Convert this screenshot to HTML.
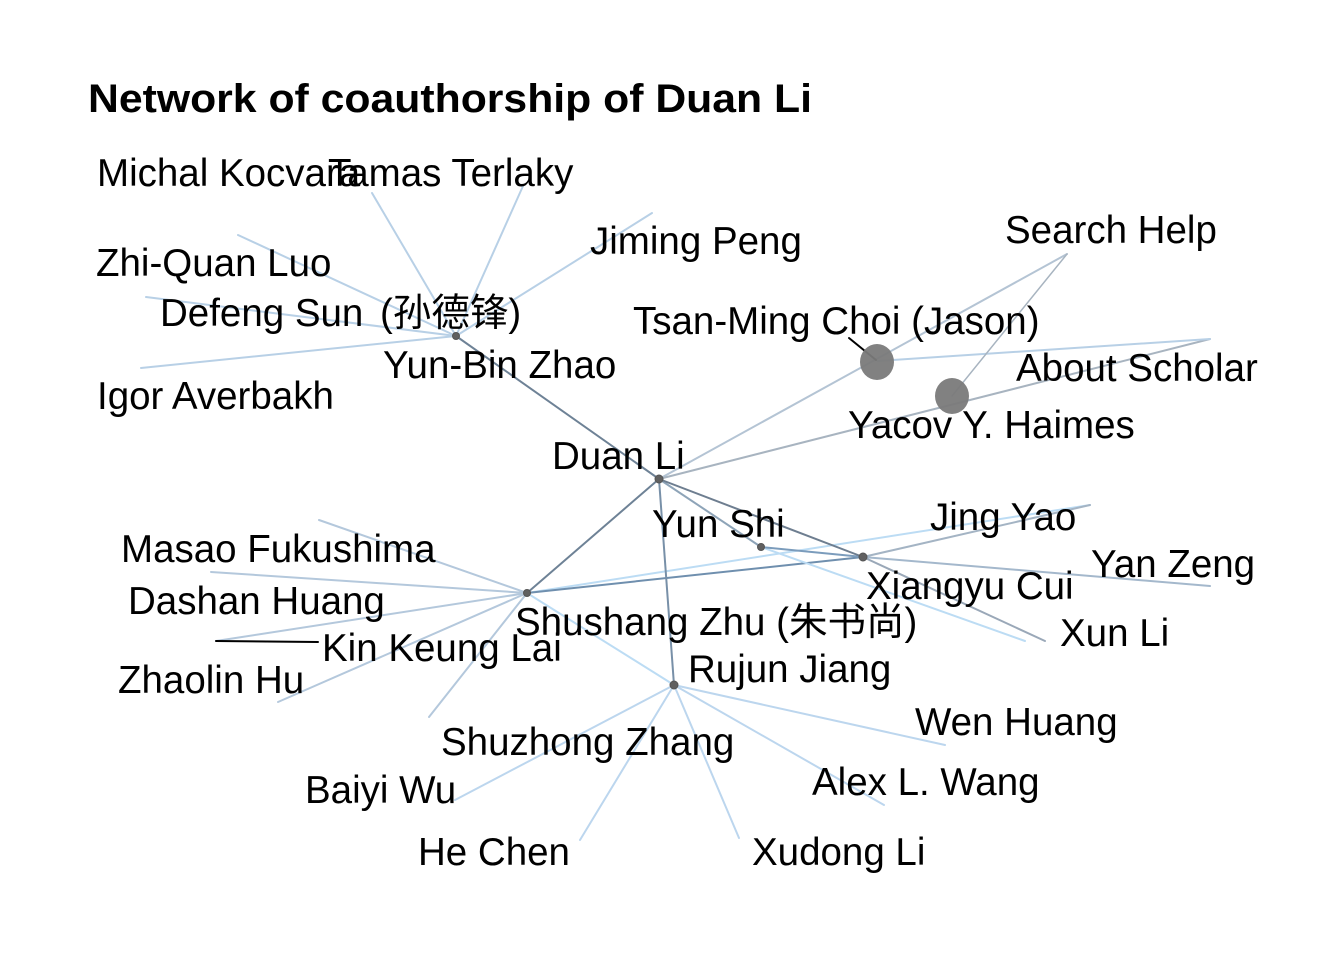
<!DOCTYPE html>
<html><head><meta charset="utf-8"><style>
html,body{margin:0;padding:0;background:#fff;}
svg{display:block;}
text{font-family:"Liberation Sans","Noto Sans CJK SC",sans-serif;font-size:38.5px;fill:#000;}
</style></head><body>
<svg width="1344" height="960" viewBox="0 0 1344 960">
<g stroke-linecap="round" fill="none">
<g stroke="#b8d0e6" stroke-width="2">
<line x1="456" y1="336" x2="372" y2="193"/>
<line x1="456" y1="336" x2="523" y2="186"/>
<line x1="456" y1="336" x2="652" y2="213"/>
<line x1="456" y1="336" x2="238" y2="235"/>
<line x1="456" y1="336" x2="146" y2="297"/>
<line x1="456" y1="336" x2="141" y2="368"/>
</g>
<g stroke="#b4c8dc" stroke-width="2">
<line x1="527" y1="593" x2="319" y2="520"/>
<line x1="527" y1="593" x2="211" y2="572"/>
<line x1="527" y1="593" x2="216" y2="641"/>
<line x1="527" y1="593" x2="278" y2="702"/>
<line x1="527" y1="593" x2="429" y2="717"/>
</g>
<line x1="527" y1="593" x2="1090" y2="505" stroke="#bcdcf4" stroke-width="2"/>
<line x1="527" y1="593" x2="674" y2="685" stroke="#bcdcf4" stroke-width="2"/>
<line x1="527" y1="593" x2="863" y2="557" stroke="#6f8fae" stroke-width="2"/>
<line x1="216" y1="641" x2="318" y2="642" stroke="#000" stroke-width="2"/>
<g stroke="#bcd6ee" stroke-width="2">
<line x1="674" y1="685" x2="945" y2="745"/>
<line x1="674" y1="685" x2="884" y2="805"/>
<line x1="674" y1="685" x2="739" y2="838"/>
<line x1="674" y1="685" x2="580" y2="840"/>
<line x1="674" y1="685" x2="455" y2="800"/>
</g>
<line x1="863" y1="557" x2="1090" y2="505" stroke="#a4b4c4" stroke-width="2"/>
<line x1="863" y1="557" x2="1210" y2="586" stroke="#a4b8cc" stroke-width="2"/>
<line x1="863" y1="557" x2="1045" y2="641" stroke="#9aa8b8" stroke-width="2"/>
<line x1="761" y1="547" x2="1025" y2="641" stroke="#bcdcf4" stroke-width="2"/>
<line x1="761" y1="547" x2="863" y2="557" stroke="#7b9cbc" stroke-width="2"/>
<line x1="659" y1="479" x2="456" y2="336" stroke="#6e8296" stroke-width="2"/>
<line x1="659" y1="479" x2="527" y2="593" stroke="#6e8296" stroke-width="2"/>
<line x1="659" y1="479" x2="674" y2="685" stroke="#7890a8" stroke-width="2"/>
<line x1="659" y1="479" x2="761" y2="547" stroke="#8ea4b8" stroke-width="2"/>
<line x1="659" y1="479" x2="863" y2="557" stroke="#6e7e90" stroke-width="2"/>
<line x1="659" y1="479" x2="1067" y2="254" stroke="#b4c4d4" stroke-width="2"/>
<line x1="659" y1="479" x2="1210" y2="339" stroke="#a8b4c0" stroke-width="2"/>
<line x1="878" y1="361" x2="1210" y2="339" stroke="#b8d0e6" stroke-width="2"/>
<line x1="952" y1="396" x2="1067" y2="254" stroke="#a8b4c0" stroke-width="1.5"/>
<line x1="849" y1="338" x2="876" y2="360" stroke="#000" stroke-width="2"/>
</g>
<g fill="#606060" stroke="#555" stroke-width="1">
<circle cx="659" cy="479" r="4"/><circle cx="456" cy="336" r="3.5"/>
<circle cx="527" cy="593" r="3.5"/><circle cx="674" cy="685" r="4"/>
<circle cx="761" cy="547" r="3.5"/><circle cx="863" cy="557" r="4"/>
</g>
<ellipse cx="877" cy="362" rx="17" ry="18" fill="#7a7a7a" opacity="0.95"/>
<ellipse cx="952" cy="396" rx="17" ry="18" fill="#7a7a7a" opacity="0.95"/>
<text x="88" y="112" style="font-weight:bold;font-size:40px" textLength="724" lengthAdjust="spacingAndGlyphs">Network of coauthorship of Duan Li</text>
<text x="97" y="186">Michal Kocvara</text>
<text x="328" y="186">Tamas Terlaky</text>
<text x="590" y="254">Jiming Peng</text>
<text x="1005" y="243">Search Help</text>
<text x="96" y="276">Zhi-Quan Luo</text>
<text x="160" y="326">Defeng Sun</text>
<text x="380" y="326">(孙德锋)</text>
<text x="633" y="334">Tsan-Ming Choi (Jason)</text>
<text x="383" y="378">Yun-Bin Zhao</text>
<text x="1016" y="381">About Scholar</text>
<text x="97" y="409">Igor Averbakh</text>
<text x="848" y="438">Yacov Y. Haimes</text>
<text x="552" y="469">Duan Li</text>
<text x="652" y="537">Yun Shi</text>
<text x="930" y="530">Jing Yao</text>
<text x="121" y="562">Masao Fukushima</text>
<text x="1091" y="577">Yan Zeng</text>
<text x="866" y="599">Xiangyu Cui</text>
<text x="128" y="614">Dashan Huang</text>
<text x="515" y="635">Shushang Zhu (朱书尚)</text>
<text x="1060" y="646">Xun Li</text>
<text x="322" y="661">Kin Keung Lai</text>
<text x="688" y="682">Rujun Jiang</text>
<text x="118" y="693">Zhaolin Hu</text>
<text x="915" y="735">Wen Huang</text>
<text x="441" y="755">Shuzhong Zhang</text>
<text x="812" y="795">Alex L. Wang</text>
<text x="305" y="803">Baiyi Wu</text>
<text x="418" y="865">He Chen</text>
<text x="752" y="865">Xudong Li</text>
</svg>
</body></html>
